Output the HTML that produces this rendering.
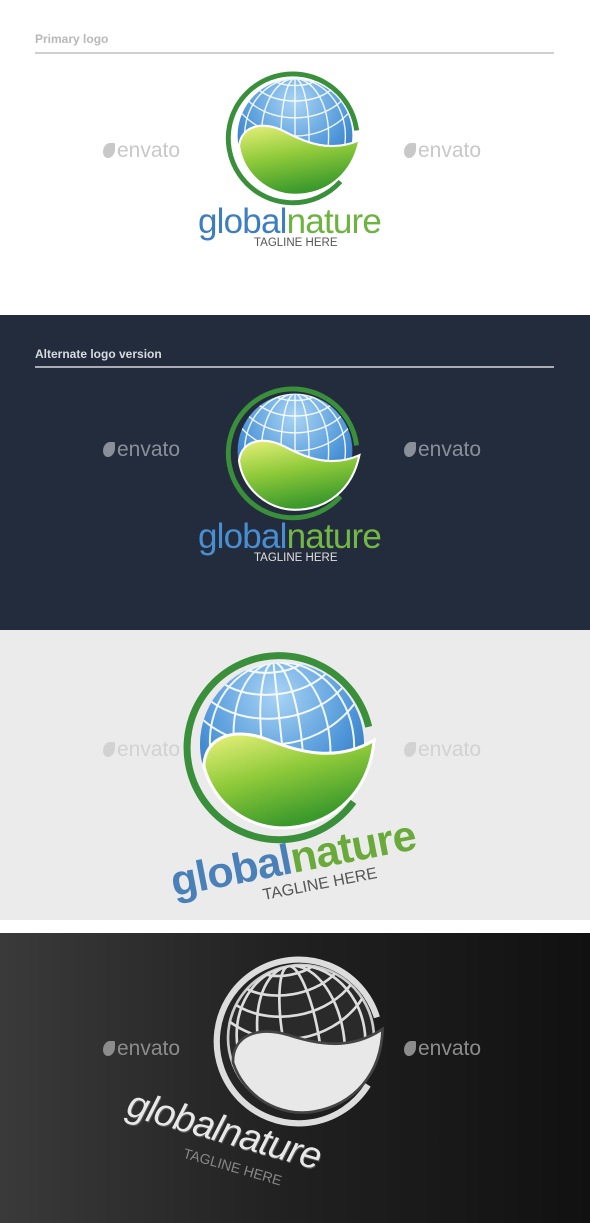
<!DOCTYPE html>
<html><head><meta charset="utf-8"><style>
*{margin:0;padding:0;box-sizing:border-box}
body{width:590px;height:1223px;position:relative;overflow:hidden;background:#fff;font-family:"Liberation Sans",sans-serif}
.sec{position:absolute;left:0;width:590px;overflow:hidden}
.lbl{position:absolute;left:35px;font-size:12px;font-weight:bold}
.rule{position:absolute;left:35px;width:519px;height:2px}
.env{position:absolute;font-size:21px;color:#c8c8c8}
.env b{display:inline-block;width:12px;height:15px;border-radius:60% 10% 60% 40%;background:currentColor;margin-right:2px;vertical-align:-1px}
.word{position:absolute;font-size:35px;letter-spacing:-0.8px;white-space:nowrap}
.tag{position:absolute;font-size:11.5px;white-space:nowrap}
svg{position:absolute}
</style></head><body>
<svg width="0" height="0" style="position:absolute">
<defs>
<radialGradient id="gb" cx="0.5" cy="0.2" r="0.8"><stop offset="0" stop-color="#a9d4f5"/><stop offset="0.6" stop-color="#4d95d8"/><stop offset="1" stop-color="#2a64b0"/></radialGradient>
<linearGradient id="gl" x1="0" y1="0" x2="0.3" y2="1"><stop offset="0" stop-color="#e7f07a"/><stop offset="0.5" stop-color="#8fca3a"/><stop offset="1" stop-color="#3c9a2c"/></linearGradient>
<clipPath id="cg"><circle cx="100" cy="100" r="82"/></clipPath>
<symbol id="logo" viewBox="0 0 200 200">
<path d="M188 92 A92 92 0 1 0 165 165" fill="none" stroke="#3a8f3a" stroke-width="7"/>
<circle cx="100" cy="100" r="82" fill="url(#gb)"/>
<g clip-path="url(#cg)" fill="none" stroke="#fff" stroke-width="2" opacity="0.9">
<ellipse cx="100" cy="100" rx="20" ry="82"/><ellipse cx="100" cy="100" rx="48" ry="82"/><ellipse cx="100" cy="100" rx="72" ry="82"/>
<line x1="100" y1="18" x2="100" y2="182"/>
<ellipse cx="100" cy="8" rx="40" ry="20"/><ellipse cx="100" cy="8" rx="66" ry="42"/><ellipse cx="100" cy="8" rx="86" ry="66"/><ellipse cx="100" cy="8" rx="100" ry="92"/>
</g>
<path d="M20 114 C24 84 55 78 86 94 C116 110 152 124 192 106 C182 155 146 184 100 184 A82 82 0 0 1 20 114 Z" fill="url(#gl)" stroke="#fff" stroke-width="3"/>
</symbol>
<symbol id="logog" viewBox="0 0 200 200">
<path d="M188 92 A92 92 0 1 0 165 165" fill="none" stroke="#ddd" stroke-width="7"/>
<circle cx="100" cy="100" r="82" fill="#2a2a2a" stroke="#ccc" stroke-width="3"/>
<g clip-path="url(#cg)" fill="none" stroke="#ddd" stroke-width="3">
<ellipse cx="100" cy="100" rx="20" ry="82"/><ellipse cx="100" cy="100" rx="48" ry="82"/><ellipse cx="100" cy="100" rx="72" ry="82"/>
<ellipse cx="100" cy="8" rx="40" ry="20"/><ellipse cx="100" cy="8" rx="66" ry="42"/><ellipse cx="100" cy="8" rx="86" ry="66"/><ellipse cx="100" cy="8" rx="100" ry="92"/>
</g>
<path d="M20 114 C24 84 55 78 86 94 C116 110 152 124 192 106 C182 155 146 184 100 184 A82 82 0 0 1 20 114 Z" fill="#e8e8e8" stroke="#444" stroke-width="3"/>
</symbol>
</defs></svg>

<div class="sec" style="top:0;height:315px;background:#fff">
<div class="lbl" style="top:32px;color:#b8b8b8">Primary logo</div>
<div class="rule" style="top:52px;background:#d0d0d0"></div>
<div class="env" style="left:103px;top:139px"><b></b>envato</div>
<div class="env" style="left:404px;top:139px"><b></b>envato</div>
<svg style="left:225px;top:66px" width="140" height="140"><use href="#logo"/></svg>
<div class="word" style="left:198px;top:202px"><span style="color:#3d7ec0">global</span><span style="color:#6db33f">nature</span></div>
<div class="tag" style="left:254px;top:237px;color:#555">TAGLINE HERE</div>
</div>

<div class="sec" style="top:315px;height:315px;background:#222c3c">
<div class="lbl" style="top:32px;color:#d8dbe0">Alternate logo version</div>
<div class="rule" style="top:51px;background:#a8adb5"></div>
<div class="env" style="left:103px;top:123px;color:#8a9099"><b></b>envato</div>
<div class="env" style="left:404px;top:123px;color:#8a9099"><b></b>envato</div>
<svg style="left:225px;top:66px" width="140" height="140"><use href="#logo"/></svg>
<div class="word" style="left:198px;top:202px"><span style="color:#4a8ed2">global</span><span style="color:#73b844">nature</span></div>
<div class="tag" style="left:254px;top:237px;color:#e0e0e0">TAGLINE HERE</div>
</div>

<div class="sec" style="top:630px;height:290px;background:#ebebeb">
<div class="env" style="left:103px;top:108px;color:#d2d2d2"><b></b>envato</div>
<div class="env" style="left:404px;top:108px;color:#d2d2d2"><b></b>envato</div>
<svg style="left:182px;top:14px;transform:rotate(-6deg)" width="200" height="200"><use href="#logo"/></svg>
<div class="word" style="left:176px;top:228px;font-size:43px;font-weight:bold;transform:rotate(-11deg);transform-origin:left bottom"><span style="color:#4a80b8">global</span><span style="color:#6aaa3a">nature</span></div>
<div class="tag" style="left:262px;top:246px;font-size:16px;color:#555;transform:rotate(-11deg)">TAGLINE HERE</div>
</div>

<div class="sec" style="top:933px;height:290px;background:linear-gradient(90deg,#3a3a3a,#202020 50%,#111)">
<div class="env" style="left:103px;top:104px;color:#8c8c8c"><b></b>envato</div>
<div class="env" style="left:404px;top:104px;color:#8c8c8c"><b></b>envato</div>
<svg style="left:212px;top:16px;transform:rotate(-10deg)" width="178" height="178"><use href="#logog"/></svg>
<div class="word" style="left:134px;top:150px;font-size:38px;font-style:italic;color:#e8e8e8;transform:rotate(16deg);transform-origin:left top;text-shadow:1px 1px 0 #555">globalnature</div>
<div class="tag" style="left:186px;top:212px;font-size:14px;color:#888;transform:rotate(16deg);transform-origin:left top">TAGLINE HERE</div>
</div>
</body></html>
